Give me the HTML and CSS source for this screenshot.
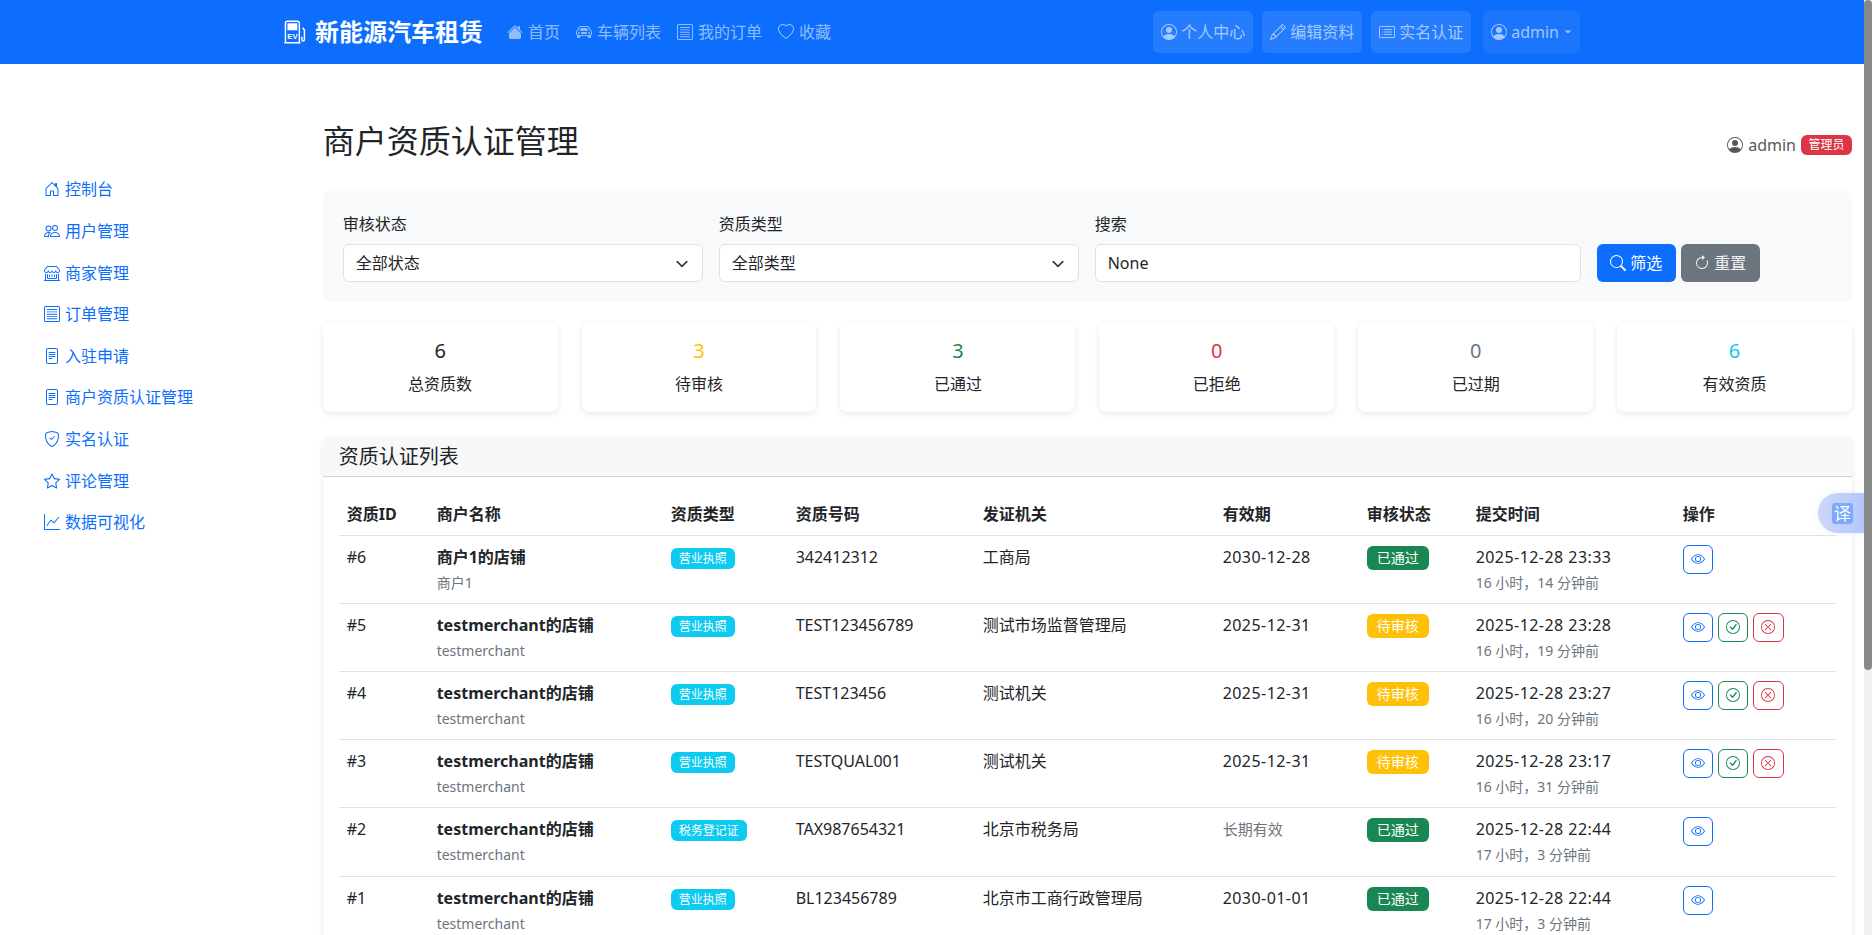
FILE: index.html
```html
<!DOCTYPE html>
<html lang="zh-CN">
<head>
<meta charset="utf-8">
<title>商户资质认证管理</title>
<link rel="stylesheet" href="styles.css">
</head>
<body>
<svg class="defs" width="0" height="0" aria-hidden="true">
<defs>
<symbol id="i-house-fill" viewBox="0 0 16 16"><path d="M8.707 1.5a1 1 0 0 0-1.414 0L.646 8.146a.5.5 0 0 0 .708.708L8 2.207l6.646 6.647a.5.5 0 0 0 .708-.708L13 5.793V2.5a.5.5 0 0 0-.5-.5h-1a.5.5 0 0 0-.5.5v1.293L8.707 1.5Z"/><path d="m8 3.293 6 6V13.5a1.5 1.5 0 0 1-1.5 1.5h-9A1.5 1.5 0 0 1 2 13.5V9.293l6-6Z"/></symbol>
<symbol id="i-house" viewBox="0 0 16 16"><path d="M8.354 1.146a.5.5 0 0 0-.708 0l-6 6A.5.5 0 0 0 1.5 7.5v7a.5.5 0 0 0 .5.5h4.5a.5.5 0 0 0 .5-.5v-4h2v4a.5.5 0 0 0 .5.5H14a.5.5 0 0 0 .5-.5v-7a.5.5 0 0 0-.146-.354L13 5.793V2.5a.5.5 0 0 0-.5-.5h-1a.5.5 0 0 0-.5.5v1.293L8.354 1.146ZM2.5 14V7.707l5.5-5.5 5.5 5.5V14H10v-4a.5.5 0 0 0-.5-.5h-3a.5.5 0 0 0-.5.5v4H2.5Z"/></symbol>
<symbol id="i-car" viewBox="0 0 16 16"><path d="M4 9a1 1 0 1 1-2 0 1 1 0 0 1 2 0Zm10 0a1 1 0 1 1-2 0 1 1 0 0 1 2 0ZM6 8a1 1 0 0 0 0 2h4a1 1 0 1 0 0-2H6ZM4.862 4.276 3.906 6.19a.51.51 0 0 0 .497.731c.91-.073 2.35-.17 3.597-.17 1.247 0 2.688.097 3.597.17a.51.51 0 0 0 .497-.731l-.956-1.913A.5.5 0 0 0 10.691 4H5.309a.5.5 0 0 0-.447.276Z"/><path d="M2.52 3.515A2.5 2.5 0 0 1 4.82 2h6.362c1 0 1.904.596 2.298 1.515l.792 1.848c.075.175.21.319.38.404.5.25.855.715.965 1.262l.335 1.679c.033.161.049.325.049.49v.413c0 .814-.39 1.543-1 1.997V13.5a.5.5 0 0 1-.5.5h-2a.5.5 0 0 1-.5-.5v-1.338c-1.292.048-2.745.088-4 .088s-2.708-.04-4-.088V13.5a.5.5 0 0 1-.5.5h-2a.5.5 0 0 1-.5-.5v-1.892c-.61-.454-1-1.183-1-1.997v-.413a2.5 2.5 0 0 1 .049-.49l.335-1.68c.11-.546.465-1.012.964-1.261a.807.807 0 0 0 .381-.404l.792-1.848ZM4.82 3a1.5 1.5 0 0 0-1.379.91l-.792 1.847a1.8 1.8 0 0 1-.853.904.807.807 0 0 0-.43.564L1.03 8.904a1.5 1.5 0 0 0-.03.294v.413c0 .796.62 1.448 1.408 1.484 1.555.07 3.786.155 5.592.155 1.806 0 4.037-.084 5.592-.155A1.479 1.479 0 0 0 15 9.611v-.413c0-.099-.01-.197-.03-.294l-.335-1.68a.807.807 0 0 0-.43-.563 1.807 1.807 0 0 1-.853-.904l-.792-1.848A1.5 1.5 0 0 0 11.18 3H4.82Z"/></symbol>
<symbol id="i-list" viewBox="0 0 16 16"><path d="M1.5 0A1.5 1.5 0 0 0 0 1.5v13A1.5 1.5 0 0 0 1.5 16h13a1.5 1.5 0 0 0 1.5-1.5v-13A1.5 1.5 0 0 0 14.5 0h-13Zm0 1h13a.5.5 0 0 1 .5.5v13a.5.5 0 0 1-.5.5h-13a.5.5 0 0 1-.5-.5v-13a.5.5 0 0 1 .5-.5Z"/><path d="M3 3h10v.9H3zM3 5.400h10v.9H3zM3 7.800h10v.9H3zM3 10.200h10v.9H3zM3 12.300h10v.9H3z"/></symbol>
<symbol id="i-heart" viewBox="0 0 16 16"><path d="m8 2.748-.717-.737C5.6.281 2.514.878 1.4 3.053c-.523 1.023-.641 2.5.314 4.385.92 1.815 2.834 3.989 6.286 6.357 3.452-2.368 5.365-4.542 6.286-6.357.955-1.886.838-3.362.314-4.385C13.486.878 10.4.28 8.717 2.01L8 2.748zM8 15C-7.333 4.868 3.279-3.04 7.824 1.143c.06.055.119.112.176.171a3.12 3.12 0 0 1 .176-.17C12.72-3.042 23.333 4.867 8 15z"/></symbol>
<symbol id="i-person" viewBox="0 0 16 16"><path d="M11 6a3 3 0 1 1-6 0 3 3 0 0 1 6 0z"/><path fill-rule="evenodd" d="M0 8a8 8 0 1 1 16 0A8 8 0 0 1 0 8zm8-7a7 7 0 0 0-5.468 11.37C3.242 11.226 4.805 10 8 10s4.757 1.225 5.468 2.37A7 7 0 0 0 8 1z"/></symbol>
<symbol id="i-pencil" viewBox="0 0 16 16"><path d="M12.146.146a.5.5 0 0 1 .708 0l3 3a.5.5 0 0 1 0 .708l-10 10a.5.5 0 0 1-.168.11l-5 2a.5.5 0 0 1-.65-.65l2-5a.5.5 0 0 1 .11-.168l10-10zM11.207 2.5 13.5 4.793 14.793 3.5 12.5 1.207 11.207 2.5zm1.586 3L10.5 3.207 4 9.707V10h.5a.5.5 0 0 1 .5.5v.5h.5a.5.5 0 0 1 .5.5v.5h.293l6.5-6.5zm-9.761 5.175-.106.106-1.528 3.821 3.821-1.528.106-.106A.5.5 0 0 1 5 12.5V12h-.5a.5.5 0 0 1-.5-.5V11h-.5a.5.5 0 0 1-.468-.325z"/></symbol>
<symbol id="i-card" viewBox="0 0 16 16"><path d="M14.5 3a.5.5 0 0 1 .5.5v9a.5.5 0 0 1-.5.5h-13a.5.5 0 0 1-.5-.5v-9a.5.5 0 0 1 .5-.5h13zm-13-1A1.5 1.5 0 0 0 0 3.5v9A1.500 1.500 0 0 0 1.500 14h13a1.500 1.500 0 0 0 1.500-1.500v-9A1.500 1.500 0 0 0 14.500 2h-13z"/><path d="M5 8a.5.5 0 0 1 .5-.5h7a.5.5 0 0 1 0 1h-7A.5.5 0 0 1 5 8zm0-2.500a.5.5 0 0 1 .5-.5h7a.5.5 0 0 1 0 1h-7a.5.5 0 0 1-.5-.5zm0 5a.5.5 0 0 1 .5-.5h7a.5.5 0 0 1 0 1h-7a.5.5 0 0 1-.5-.5zm-1-5a.5.5 0 1 1-1 0 .5.5 0 0 1 1 0zM4 8a.5.5 0 1 1-1 0 .5.5 0 0 1 1 0zm0 2.500a.5.5 0 1 1-1 0 .5.5 0 0 1 1 0z"/></symbol>
<symbol id="i-people" viewBox="0 0 16 16"><path d="M15 14s1 0 1-1-1-4-5-4-5 3-5 4 1 1 1 1h8Zm-7.978-1A.261.261 0 0 1 7 12.996c.001-.264.167-1.030.76-1.720C8.312 10.629 9.282 10 11 10c1.717 0 2.687.63 3.240 1.276.593.69.758 1.457.76 1.720l-.008.002a.274.274 0 0 1-.014.002H7.022ZM11 7a2 2 0 1 0 0-4 2 2 0 0 0 0 4Zm3-2a3 3 0 1 1-6 0 3 3 0 0 1 6 0ZM6.936 9.280a5.880 5.880 0 0 0-1.230-.247A7.350 7.350 0 0 0 5 9c-4 0-5 3-5 4 0 .667.333 1 1 1h4.216A2.238 2.238 0 0 1 5 13c0-1.010.377-2.042 1.090-2.904.243-.294.526-.569.846-.816ZM4.920 10A5.493 5.493 0 0 0 4 13H1c0-.26.164-1.030.76-1.724.545-.636 1.492-1.256 3.160-1.275ZM1.500 5.500a3 3 0 1 1 6 0 3 3 0 0 1-6 0Zm3-2a2 2 0 1 0 0 4 2 2 0 0 0 0-4Z"/></symbol>
<symbol id="i-shop" viewBox="0 0 16 16"><path d="M2.970 1.350A1 1 0 0 1 3.730 1h8.540a1 1 0 0 1 .76.35l2.609 3.044A1.500 1.500 0 0 1 16 5.370v.255a2.375 2.375 0 0 1-4.250 1.458A2.371 2.371 0 0 1 9.875 8 2.370 2.370 0 0 1 8 7.083 2.370 2.370 0 0 1 6.125 8a2.370 2.370 0 0 1-1.875-.917A2.375 2.375 0 0 1 0 5.625V5.370a1.500 1.500 0 0 1 .361-.976l2.610-3.045zm1.780 4.275a1.375 1.375 0 0 0 2.750 0 .5.5 0 0 1 1 0 1.375 1.375 0 0 0 2.750 0 .5.5 0 0 1 1 0 1.375 1.375 0 1 0 2.750 0V5.370a.5.5 0 0 0-.12-.325L12.270 2H3.730L1.120 5.045A.5.5 0 0 0 1 5.370v.255a1.375 1.375 0 0 0 2.750 0 .5.5 0 0 1 1 0zM1.500 8.500A.5.5 0 0 1 2 9v6h12V9a.5.5 0 0 1 1 0v6h.5a.5.5 0 0 1 0 1H.5a.5.5 0 0 1 0-1H1V9a.5.5 0 0 1 .5-.5zm2 .5a.5.5 0 0 1 .5.5V13h8V9.500a.5.5 0 0 1 1 0V13a1 1 0 0 1-1 1H4a1 1 0 0 1-1-1V9.500a.5.5 0 0 1 .5-.5z"/><path d="M5 9.500h1v2.500H5zM7.500 9.500h1v2.500h-1zM10 9.500h1v2.500h-1z"/></symbol>
<symbol id="i-file" viewBox="0 0 16 16"><path d="M5 4a.5.5 0 0 0 0 1h6a.5.5 0 0 0 0-1H5zm-.5 2.500A.5.5 0 0 1 5 6h6a.5.5 0 0 1 0 1H5a.5.5 0 0 1-.5-.5zM5 8a.5.5 0 0 0 0 1h6a.5.5 0 0 0 0-1H5zm0 2a.5.5 0 0 0 0 1h3a.5.5 0 0 0 0-1H5z"/><path d="M2 2a2 2 0 0 1 2-2h8a2 2 0 0 1 2 2v12a2 2 0 0 1-2 2H4a2 2 0 0 1-2-2V2zm10-1H4a1 1 0 0 0-1 1v12a1 1 0 0 0 1 1h8a1 1 0 0 0 1-1V2a1 1 0 0 0-1-1z"/></symbol>
<symbol id="i-shield" viewBox="0 0 16 16"><path d="M5.338 1.590a61.440 61.440 0 0 0-2.837.856.481.481 0 0 0-.328.39c-.554 4.157.726 7.190 2.253 9.188a10.725 10.725 0 0 0 2.287 2.233c.346.244.652.42.893.533.12.057.218.095.293.118a.55.55 0 0 0 .101.025.615.615 0 0 0 .1-.025c.076-.023.174-.061.294-.118.24-.113.547-.29.893-.533a10.726 10.726 0 0 0 2.287-2.233c1.527-1.997 2.807-5.031 2.253-9.188a.48.48 0 0 0-.328-.39c-.651-.213-1.750-.56-2.837-.855C9.552 1.290 8.531 1.067 8 1.067c-.53 0-1.552.223-2.662.524zM5.072.56C6.157.265 7.310 0 8 0s1.843.265 2.928.56c1.110.3 2.229.655 2.887.87a1.540 1.540 0 0 1 1.044 1.262c.596 4.477-.787 7.795-2.465 9.990a11.775 11.775 0 0 1-2.517 2.453 7.159 7.159 0 0 1-1.048.625c-.28.132-.581.24-.829.24s-.548-.108-.829-.24a7.158 7.158 0 0 1-1.048-.625 11.777 11.777 0 0 1-2.517-2.453C1.928 10.487.545 7.169 1.141 2.692A1.540 1.540 0 0 1 2.185 1.430 62.456 62.456 0 0 1 5.072.56z"/><path d="M10.854 5.146a.5.5 0 0 1 0 .708l-3 3a.5.5 0 0 1-.708 0l-1.500-1.500a.5.5 0 1 1 .708-.708L7.500 7.793l2.646-2.647a.5.5 0 0 1 .708 0z"/></symbol>
<symbol id="i-star" viewBox="0 0 16 16"><path d="M2.866 14.850c-.078.444.36.791.746.593l4.390-2.256 4.389 2.256c.386.198.824-.149.746-.592l-.83-4.730 3.522-3.356c.33-.314.16-.888-.282-.95l-4.898-.696L8.465.792a.513.513 0 0 0-.927 0L5.354 5.120l-4.898.696c-.441.062-.612.636-.283.95l3.523 3.356-.83 4.730zm4.905-2.767-3.686 1.894.694-3.957a.565.565 0 0 0-.163-.505L1.710 6.745l4.052-.576a.525.525 0 0 0 .393-.288L8 2.223l1.847 3.658a.525.525 0 0 0 .393.288l4.052.575-2.906 2.770a.565.565 0 0 0-.163.506l.694 3.957-3.686-1.894a.503.503 0 0 0-.461 0z"/></symbol>
<symbol id="i-graph" viewBox="0 0 16 16"><path d="M0 0h1v15h15v1H0V0Zm14.817 3.113a.5.5 0 0 1 .07.704l-4.500 5.500a.5.5 0 0 1-.74.037L7.060 6.767l-3.656 5.027a.5.5 0 0 1-.808-.588l4-5.500a.5.5 0 0 1 .758-.06l2.609 2.610 4.150-5.073a.5.5 0 0 1 .704-.07Z"/></symbol>
<symbol id="i-search" viewBox="0 0 16 16"><path d="M11.742 10.344a6.500 6.500 0 1 0-1.397 1.398h-.001c.03.04.062.078.098.115l3.850 3.850a1 1 0 0 0 1.415-1.414l-3.850-3.850a1.007 1.007 0 0 0-.115-.1zM12 6.500a5.500 5.500 0 1 1-11 0 5.500 5.500 0 0 1 11 0z"/></symbol>
<symbol id="i-reset" viewBox="0 0 16 16"><path fill-rule="evenodd" d="M8 3a5 5 0 1 0 4.546 2.914.5.5 0 0 1 .908-.417A6 6 0 1 1 8 2v1z"/><path d="M8 4.466V.534a.25.25 0 0 1 .41-.192l2.360 1.966c.12.1.12.284 0 .384L8.410 4.658A.25.25 0 0 1 8 4.466z"/></symbol>
<symbol id="i-eye" viewBox="0 0 16 16"><path d="M16 8s-3-5.500-8-5.500S0 8 0 8s3 5.500 8 5.500S16 8 16 8zM1.173 8a13.133 13.133 0 0 1 1.660-2.043C4.120 4.668 5.880 3.500 8 3.500c2.120 0 3.879 1.168 5.168 2.457A13.133 13.133 0 0 1 14.828 8c-.058.087-.122.183-.195.288-.335.48-.83 1.120-1.465 1.755C11.879 11.332 10.119 12.500 8 12.500c-2.120 0-3.879-1.168-5.168-2.457A13.134 13.134 0 0 1 1.172 8z"/><path d="M8 5.500a2.500 2.500 0 1 0 0 5 2.500 2.500 0 0 0 0-5zM4.500 8a3.500 3.500 0 1 1 7 0 3.500 3.500 0 0 1-7 0z"/></symbol>
<symbol id="i-check" viewBox="0 0 16 16"><path d="M8 15A7 7 0 1 1 8 1a7 7 0 0 1 0 14zm0 1A8 8 0 1 0 8 0a8 8 0 0 0 0 16z"/><path d="M10.970 4.970a.235.235 0 0 0-.02.022L7.477 9.417 5.384 7.323a.75.75 0 0 0-1.060 1.060L6.970 11.030a.75.75 0 0 0 1.079-.02l3.992-4.990a.75.75 0 0 0-1.071-1.050z"/></symbol>
<symbol id="i-x" viewBox="0 0 16 16"><path d="M8 15A7 7 0 1 1 8 1a7 7 0 0 1 0 14zm0 1A8 8 0 1 0 8 0a8 8 0 0 0 0 16z"/><path d="M4.646 4.646a.5.5 0 0 1 .708 0L8 7.293l2.646-2.647a.5.5 0 0 1 .708.708L8.707 8l2.647 2.646a.5.5 0 0 1-.708.708L8 8.707l-2.646 2.647a.5.5 0 0 1-.708-.708L7.293 8 4.646 5.354a.5.5 0 0 1 0-.708z"/></symbol>
</defs>
</svg>

<nav class="navbar">
  <div class="nav-inner">
    <a class="brand">
      <svg class="brand-icon" viewBox="0 0 24 24"><path class="brand-line" d="M1.500 23V2.500A2 2 0 0 1 3.500 .8h10.500a2 2 0 0 1 2 1.700V23M.3 23.200H17.200M19.500 7.500l1.800 2.500v10a1.300 1.300 0 0 1-2.600 0v-3"/><rect class="brand-fill" x="3.600" y="2.900" width="10.300" height="7.300"/><text class="brand-ev" x="8.800" y="19.800">EV</text></svg>
      <span>新能源汽车租赁</span>
    </a>
    <ul class="nav-left">
      <li><a class="nav-link"><svg class="ico ico-home"><use href="#i-house-fill"/></svg>首页</a></li>
      <li><a class="nav-link"><svg class="ico"><use href="#i-car"/></svg>车辆列表</a></li>
      <li><a class="nav-link"><svg class="ico"><use href="#i-list"/></svg>我的订单</a></li>
      <li><a class="nav-link"><svg class="ico"><use href="#i-heart"/></svg>收藏</a></li>
    </ul>
    <ul class="nav-right">
      <li><a class="nav-box"><svg class="ico"><use href="#i-person"/></svg>个人中心</a></li>
      <li><a class="nav-box"><svg class="ico"><use href="#i-pencil"/></svg>编辑资料</a></li>
      <li><a class="nav-box"><svg class="ico"><use href="#i-card"/></svg>实名认证</a></li>
      <li class="nav-user"><a class="nav-box nav-box-soft"><svg class="ico"><use href="#i-person"/></svg>admin<i class="caret"></i></a></li>
    </ul>
  </div>
</nav>

<div class="layout">
  <aside class="sidebar">
    <a class="side-link"><svg class="ico"><use href="#i-house"/></svg>控制台</a>
    <a class="side-link"><svg class="ico"><use href="#i-people"/></svg>用户管理</a>
    <a class="side-link"><svg class="ico"><use href="#i-shop"/></svg>商家管理</a>
    <a class="side-link"><svg class="ico"><use href="#i-list"/></svg>订单管理</a>
    <a class="side-link"><svg class="ico"><use href="#i-file"/></svg>入驻申请</a>
    <a class="side-link"><svg class="ico"><use href="#i-file"/></svg>商户资质认证管理</a>
    <a class="side-link"><svg class="ico"><use href="#i-shield"/></svg>实名认证</a>
    <a class="side-link"><svg class="ico"><use href="#i-star"/></svg>评论管理</a>
    <a class="side-link"><svg class="ico"><use href="#i-graph"/></svg>数据可视化</a>
  </aside>

  <main class="main">
    <header class="page-head">
      <h1>商户资质认证管理</h1>
      <div class="who"><svg class="ico"><use href="#i-person"/></svg>admin<span class="role">管理员</span></div>
    </header>

    <form class="filters">
      <div class="field">
        <label>审核状态</label>
        <div class="select">全部状态<svg viewBox="0 0 16 16"><path d="m2 5 6 6 6-6"/></svg></div>
      </div>
      <div class="field">
        <label>资质类型</label>
        <div class="select">全部类型<svg viewBox="0 0 16 16"><path d="m2 5 6 6 6-6"/></svg></div>
      </div>
      <div class="field">
        <label>搜索</label>
        <div class="select">None</div>
      </div>
      <div class="actions">
        <a class="btn btn-blue"><svg class="ico"><use href="#i-search"/></svg>筛选</a>
        <a class="btn btn-grey"><svg class="ico"><use href="#i-reset"/></svg>重置</a>
      </div>
    </form>

    <section class="stats">
      <div class="stat"><b class="num">6</b><span>总资质数</span></div>
      <div class="stat"><b class="num c-yellow">3</b><span>待审核</span></div>
      <div class="stat"><b class="num c-green">3</b><span>已通过</span></div>
      <div class="stat"><b class="num c-red">0</b><span>已拒绝</span></div>
      <div class="stat"><b class="num c-grey">0</b><span>已过期</span></div>
      <div class="stat"><b class="num c-cyan">6</b><span>有效资质</span></div>
    </section>

    <section class="card">
      <h2 class="card-head">资质认证列表</h2>
      <div class="card-body">
        <table>
          <colgroup><col class="c1"><col class="c2"><col class="c3"><col class="c4"><col class="c5"><col class="c6"><col class="c7"><col class="c8"><col class="c9"></colgroup>
          <thead><tr><th>资质ID</th><th>商户名称</th><th>资质类型</th><th>资质号码</th><th>发证机关</th><th>有效期</th><th>审核状态</th><th>提交时间</th><th>操作</th></tr></thead>
          <tbody>
            <tr><td>#6</td><td><div class="name">商户1的店铺</div><div class="sub">商户1</div></td><td><span class="tag">营业执照</span></td><td>342412312</td><td>工商局</td><td class="date">2030-12-28</td><td><span class="state ok">已通过</span></td><td><div class="date">2025-12-28 23:33</div><div class="sub">16 小时，14 分钟前</div></td><td><div class="ops"><a class="op op-blue"><svg class="ico"><use href="#i-eye"/></svg></a></div></td></tr>
            <tr><td>#5</td><td><div class="name">testmerchant的店铺</div><div class="sub">testmerchant</div></td><td><span class="tag">营业执照</span></td><td>TEST123456789</td><td>测试市场监督管理局</td><td class="date">2025-12-31</td><td><span class="state wait">待审核</span></td><td><div class="date">2025-12-28 23:28</div><div class="sub">16 小时，19 分钟前</div></td><td><div class="ops"><a class="op op-blue"><svg class="ico"><use href="#i-eye"/></svg></a><a class="op op-green"><svg class="ico"><use href="#i-check"/></svg></a><a class="op op-red"><svg class="ico"><use href="#i-x"/></svg></a></div></td></tr>
            <tr><td>#4</td><td><div class="name">testmerchant的店铺</div><div class="sub">testmerchant</div></td><td><span class="tag">营业执照</span></td><td>TEST123456</td><td>测试机关</td><td class="date">2025-12-31</td><td><span class="state wait">待审核</span></td><td><div class="date">2025-12-28 23:27</div><div class="sub">16 小时，20 分钟前</div></td><td><div class="ops"><a class="op op-blue"><svg class="ico"><use href="#i-eye"/></svg></a><a class="op op-green"><svg class="ico"><use href="#i-check"/></svg></a><a class="op op-red"><svg class="ico"><use href="#i-x"/></svg></a></div></td></tr>
            <tr><td>#3</td><td><div class="name">testmerchant的店铺</div><div class="sub">testmerchant</div></td><td><span class="tag">营业执照</span></td><td>TESTQUAL001</td><td>测试机关</td><td class="date">2025-12-31</td><td><span class="state wait">待审核</span></td><td><div class="date">2025-12-28 23:17</div><div class="sub">16 小时，31 分钟前</div></td><td><div class="ops"><a class="op op-blue"><svg class="ico"><use href="#i-eye"/></svg></a><a class="op op-green"><svg class="ico"><use href="#i-check"/></svg></a><a class="op op-red"><svg class="ico"><use href="#i-x"/></svg></a></div></td></tr>
            <tr class="tall"><td>#2</td><td><div class="name">testmerchant的店铺</div><div class="sub">testmerchant</div></td><td><span class="tag">税务登记证</span></td><td>TAX987654321</td><td>北京市税务局</td><td class="muted">长期有效</td><td><span class="state ok">已通过</span></td><td><div class="date">2025-12-28 22:44</div><div class="sub">17 小时，3 分钟前</div></td><td><div class="ops"><a class="op op-blue"><svg class="ico"><use href="#i-eye"/></svg></a></div></td></tr>
            <tr><td>#1</td><td><div class="name">testmerchant的店铺</div><div class="sub">testmerchant</div></td><td><span class="tag">营业执照</span></td><td>BL123456789</td><td>北京市工商行政管理局</td><td class="date">2030-01-01</td><td><span class="state ok">已通过</span></td><td><div class="date">2025-12-28 22:44</div><div class="sub">17 小时，3 分钟前</div></td><td><div class="ops"><a class="op op-blue"><svg class="ico"><use href="#i-eye"/></svg></a></div></td></tr>
          </tbody>
        </table>
      </div>
    </section>
  </main>
</div>

<div class="translate"><span>译</span></div>
<div class="scrollbar"><div class="scrollbar-thumb"></div></div>
</body>
</html>
```
FILE: styles.css
```css
*{box-sizing:border-box}
body{margin:0;padding-right:8px;font-family:"Noto Sans","Noto Sans CJK SC",sans-serif;font-size:16px;line-height:24px;color:#212529;background:#fff}
.defs{position:absolute}
.ico{width:16px;height:16px;fill:currentColor;display:inline-block;flex:none}
a{text-decoration:none;color:inherit}
ul{list-style:none;margin:0;padding:0}

.navbar{height:64px;background:#0d6efd}
.nav-inner{width:1320px;margin:0 auto;padding:0 12px;height:64px;display:flex;align-items:center}
.brand{display:flex;align-items:center;gap:8px;color:#fff;font-size:24px;font-weight:700;margin-right:24px;white-space:nowrap}
.brand-icon{width:23px;height:24px}
.brand-line{fill:none;stroke:#fff;stroke-width:1.500}
.brand-fill{fill:#fff}
.brand-ev{fill:#fff;font-family:"Liberation Sans",sans-serif;font-size:8px;font-weight:700;text-anchor:middle}
.nav-left{display:flex;gap:16px}
.nav-link{display:flex;align-items:center;gap:5px;color:rgba(255,255,255,.55);line-height:24px;white-space:nowrap}
.nav-right{display:flex;gap:9px;margin-left:auto}
.nav-box{display:flex;align-items:center;gap:4px;height:42px;padding:0 8px;border-radius:5px;background:rgba(255,255,255,.1);color:rgba(255,255,255,.6);white-space:nowrap}
.nav-box-soft{background:rgba(255,255,255,.06)}
.nav-user{margin-left:3px}
.caret{display:inline-block;margin-left:1px;border-top:4.800px solid;border-left:4.800px solid transparent;border-right:4.800px solid transparent;transform:scale(.8)}

.layout{display:flex;align-items:flex-start;min-height:1245px}
.sidebar{width:310.670px;flex:none;padding:104.700px 12px 0 28px;display:flex;flex-direction:column}
.side-link{display:flex;align-items:center;gap:5px;height:41.600px;padding-left:16px;color:#0d6efd;white-space:nowrap}
.main{flex:1;min-width:0;padding:0 12px}

.page-head{display:flex;justify-content:space-between;align-items:center;height:127px;padding-top:27px}
.page-head h1{margin:0;font-size:32px;line-height:38px;font-weight:400;color:#212529}
.who{display:flex;align-items:center;gap:5px;color:#55595e;padding-top:7px}
.role{display:block;padding:0 7.500px;height:20px;line-height:20px;font-size:12px;color:#fff;background:#dc3545;border-radius:6px}

.filters{display:grid;grid-template-columns:360px 360px 486px 1fr;gap:16px;padding:21px 20px 20px;background:#f8f9fa;border-radius:8px;height:111px}
.field label{display:block;line-height:24px;margin-bottom:8px;color:#212529}
.select{position:relative;height:38px;line-height:36px;padding:0 12px;background:#fff;border:1px solid #dee2e6;border-radius:6px;color:#212529}
.select svg{position:absolute;right:12px;top:11px;width:16px;height:16px;fill:none;stroke:#343a40;stroke-width:2;stroke-linecap:round;stroke-linejoin:round;transform:scale(.8)}
.actions{display:flex;gap:5px;align-items:flex-end}
.btn{display:flex;align-items:center;justify-content:center;gap:4px;width:79px;height:38px;border-radius:6px;color:#fff}
.btn-blue{background:#0d6efd}
.btn-grey{background:#6c757d;color:#f1f2f3}

.stats{display:grid;grid-template-columns:repeat(6,1fr);gap:24px;margin-top:20px}
.stat{height:90px;background:#fff;border-radius:8px;box-shadow:0 2px 6px rgba(0,0,0,.09);display:flex;flex-direction:column;align-items:center;padding-top:17px}
.num{font-size:20px;line-height:24px;font-weight:400;color:#212529;margin-bottom:9px}
.c-yellow{color:#ffc107}.c-green{color:#198754}.c-red{color:#dc3545}.c-grey{color:#6c757d}.c-cyan{color:#0dcaf0}

.card{margin-top:25px;background:#fff;border-radius:8px;box-shadow:0 2px 6px rgba(0,0,0,.09)}
.card-head{margin:0;height:40px;padding:8px 16px;font-size:20px;line-height:24px;font-weight:400;background:#f8f8f8;border-bottom:1px solid #d4d4d4;border-radius:8px 8px 0 0;color:#212529}
.card-body{padding:16px}
table{width:1497px;table-layout:fixed;border-collapse:collapse}
.c1{width:90px}.c2{width:234px}.c3{width:125px}.c4{width:187px}.c5{width:240px}.c6{width:144px}.c7{width:109px}.c8{width:207px}.c9{width:161px}
th{height:42px;padding:8px;text-align:left;font-weight:700;line-height:24px;color:#212529;border-bottom:1px solid #dee2e6;vertical-align:middle}
td{height:68px;padding:9px 8px 0;vertical-align:top;line-height:24px;color:#212529;border-bottom:1px solid #dee2e6}
.tall td{height:69px}
.date{letter-spacing:.45px}
.name{font-weight:700}
.sub{font-size:14px;line-height:21px;margin-top:3.500px;color:#6c757d}
.muted{color:#6c757d;font-size:15px}
.tag{display:inline-block;height:21px;line-height:21px;padding:0 8px;font-size:12px;color:#fff;background:#0dcaf0;border-radius:6px;vertical-align:top;margin-top:3px}
.state{display:inline-block;height:24px;line-height:24px;width:62px;text-align:center;font-size:14px;color:#fff;border-radius:6px;vertical-align:top;margin-top:1px}
.ok{background:#198754}
.wait{background:#ffc107}
.ops{display:flex;gap:4.600px}
.op{display:flex;align-items:center;justify-content:center;width:30.600px;height:29px;border:1px solid;border-radius:6px}
.op .ico{width:14px;height:14px}
.op-blue{color:#0d6efd}.op-green{color:#198754}.op-red{color:#dc3545}

.translate{position:fixed;right:8px;top:493px;width:46px;height:40px;border-radius:20px 0 0 20px;background:linear-gradient(90deg,#cdd7f7,#b4c6fb);display:flex;align-items:center;padding-left:14px;box-shadow:0 0 6px rgba(180,198,251,.25)}
.translate span{display:block;width:21px;height:21px;line-height:21px;text-align:center;font-size:17px;color:#fff;background:#7caaf8;border-radius:3px}

.scrollbar{position:fixed;top:0;right:0;bottom:0;width:8px;background:#f1f1f1}
.scrollbar-thumb{height:670px;background:#888;border-radius:4px}
```
